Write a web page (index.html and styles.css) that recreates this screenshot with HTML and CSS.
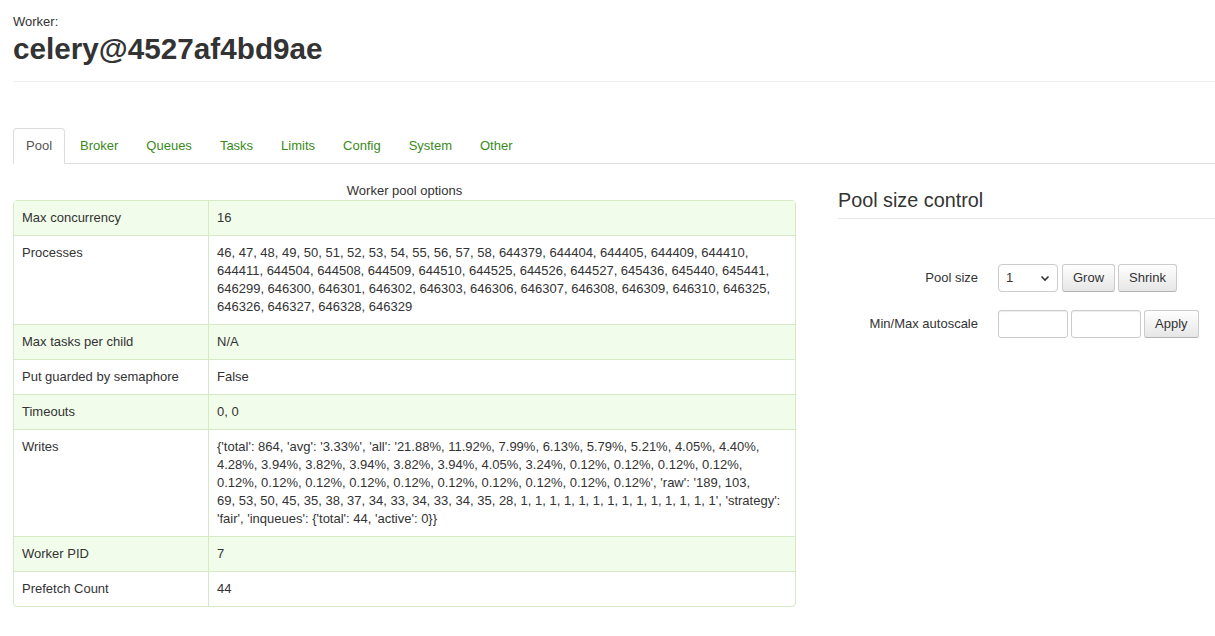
FILE: index.html
```html
<!DOCTYPE html>
<html>
<head>
<meta charset="utf-8">
<title>Worker celery@4527af4bd9ae</title>
<link rel="stylesheet" href="styles.css">
</head>
<body>
<div class="page">
  <header class="page-header">
    <div class="eyebrow">Worker:</div>
    <h1 class="title">celery@4527af4bd9ae</h1>
  </header>

  <ul class="tabs">
    <li class="tab active"><a href="#">Pool</a></li>
    <li class="tab"><a href="#">Broker</a></li>
    <li class="tab"><a href="#">Queues</a></li>
    <li class="tab"><a href="#">Tasks</a></li>
    <li class="tab"><a href="#">Limits</a></li>
    <li class="tab"><a href="#">Config</a></li>
    <li class="tab"><a href="#">System</a></li>
    <li class="tab"><a href="#">Other</a></li>
  </ul>

  <div class="content">
    <div class="left">
      <table class="options">
        <caption>Worker pool options</caption>
        <tbody>
          <tr><td class="key">Max concurrency</td><td>16</td></tr>
          <tr><td class="key">Processes</td><td>46, 47, 48, 49, 50, 51, 52, 53, 54, 55, 56, 57, 58, 644379, 644404, 644405, 644409, 644410, 644411, 644504, 644508, 644509, 644510, 644525, 644526, 644527, 645436, 645440, 645441, 646299, 646300, 646301, 646302, 646303, 646306, 646307, 646308, 646309, 646310, 646325, 646326, 646327, 646328, 646329</td></tr>
          <tr><td class="key">Max tasks per child</td><td>N/A</td></tr>
          <tr><td class="key">Put guarded by semaphore</td><td>False</td></tr>
          <tr><td class="key">Timeouts</td><td>0, 0</td></tr>
          <tr><td class="key">Writes</td><td class="writes">{'total': 864, 'avg': '3.33%', 'all': '21.88%, 11.92%, 7.99%, 6.13%, 5.79%, 5.21%, 4.05%, 4.40%,<br>4.28%, 3.94%, 3.82%, 3.94%, 3.82%, 3.94%, 4.05%, 3.24%, 0.12%, 0.12%, 0.12%, 0.12%,<br>0.12%, 0.12%, 0.12%, 0.12%, 0.12%, 0.12%, 0.12%, 0.12%, 0.12%, 0.12%', 'raw': '189, 103,<br>69, 53, 50, 45, 35, 38, 37, 34, 33, 34, 33, 34, 35, 28, 1, 1, 1, 1, 1, 1, 1, 1, 1, 1, 1, 1, 1, 1', 'strategy':<br>'fair', 'inqueues': {'total': 44, 'active': 0}}</td></tr>
          <tr><td class="key">Worker PID</td><td>7</td></tr>
          <tr><td class="key">Prefetch Count</td><td>44</td></tr>
        </tbody>
      </table>
    </div>

    <div class="right">
      <h3 class="section-title">Pool size control</h3>
      <form class="form-horizontal">
        <div class="control-group">
          <label class="control-label">Pool size</label>
          <div class="controls">
            <div class="select">
              <span>1</span>
              <svg class="chev" width="10" height="7" viewBox="0 0 10 7"><path d="M1.5 1.5 L5 5 L8.5 1.5" fill="none" stroke="#333" stroke-width="1.6"/></svg>
            </div>
            <button type="button" class="btn">Grow</button>
            <button type="button" class="btn">Shrink</button>
          </div>
        </div>
        <div class="control-group">
          <label class="control-label">Min/Max autoscale</label>
          <div class="controls">
            <input class="field" type="text">
            <input class="field" type="text">
            <button type="button" class="btn">Apply</button>
          </div>
        </div>
      </form>
    </div>
  </div>
</div>
</body>
</html>
```

FILE: styles.css
```css
* { box-sizing: border-box; }
html, body { margin: 0; padding: 0; background: #fff; }
body {
  font-family: "Liberation Sans", Arial, sans-serif;
  font-size: 13px;
  line-height: 18px;
  color: #333;
}
.page { padding: 13px 0 0 13px; }

.page-header {
  border-bottom: 1px solid #eee;
  padding-bottom: 14px;
}
.eyebrow { font-size: 13px; line-height: 18px; }
.title {
  margin: 0;
  font-size: 29.7px;
  line-height: 36px;
  font-weight: bold;
  color: #333;
}

.tabs {
  list-style: none;
  margin: 46px 0 0 0;
  padding: 0;
  display: flex;
  border-bottom: 1px solid #ddd;
}
.tab { margin-right: 2px; margin-bottom: -1px; }
.tab a {
  display: block;
  padding: 8px 12px;
  line-height: 18px;
  border: 1px solid transparent;
  border-radius: 4px 4px 0 0;
  color: #3a8a1a;
  text-decoration: none;
}
.tab.active a {
  color: #555;
  background: #fff;
  border-color: #ddd #ddd transparent #ddd;
}

.content {
  display: grid;
  grid-template-columns: 783px 1fr;
  column-gap: 42px;
  margin-top: 18px;
}

.options {
  width: 100%;
  border-collapse: separate;
  border-spacing: 0;
  border: 1px solid #d6e9c6;
  border-radius: 4px;
}
.options caption {
  caption-side: top;
  text-align: center;
  line-height: 18px;
  padding-bottom: 0;
}
.options td {
  padding: 8px 8px;
  vertical-align: top;
  border-top: 1px solid #d6e9c6;
  line-height: 18px;
}
.options tr:first-child td { border-top: 0; }
.options td.key { width: 195px; border-right: 1px solid #d6e9c6; }
.options tr:nth-child(odd) td { background: #f1fcea; }
.options td.writes { padding-right: 4px; }

.section-title {
  margin: 6px 0 0 0;
  font-size: 19.8px;
  font-weight: normal;
  line-height: 24px;
  padding-bottom: 6px;
  border-bottom: 1px solid #e5e5e5;
}

.form-horizontal { margin-top: 45px; }
.control-group {
  display: flex;
  align-items: center;
  margin-bottom: 18px;
}
.control-label {
  width: 140px;
  text-align: right;
  padding-right: 0;
}
.controls {
  margin-left: 20px;
  display: flex;
  align-items: center;
  gap: 3px;
}
.select {
  width: 60px;
  height: 28px;
  border: 1px solid #ccc;
  border-radius: 4px;
  background: #fff;
  display: flex;
  align-items: center;
  justify-content: space-between;
  padding: 0 7px 0 7px;
  margin-right: 1px;
}
.chev { display: block; }
.btn {
  font-family: "Liberation Sans", Arial, sans-serif;
  font-size: 13px;
  line-height: 18px;
  height: 28px;
  padding: 4px 10px;
  color: #333;
  background: linear-gradient(#ffffff, #e6e6e6);
  border: 1px solid #ccc;
  border-bottom-color: #b3b3b3;
  border-radius: 3px;
}
.field {
  width: 70px;
  height: 28px;
  border: 1px solid #ccc;
  border-radius: 3px;
  padding: 4px 6px;
  font-size: 13px;
  background: #fff;
  box-shadow: inset 0 1px 1px rgba(0,0,0,0.075);
}
```
